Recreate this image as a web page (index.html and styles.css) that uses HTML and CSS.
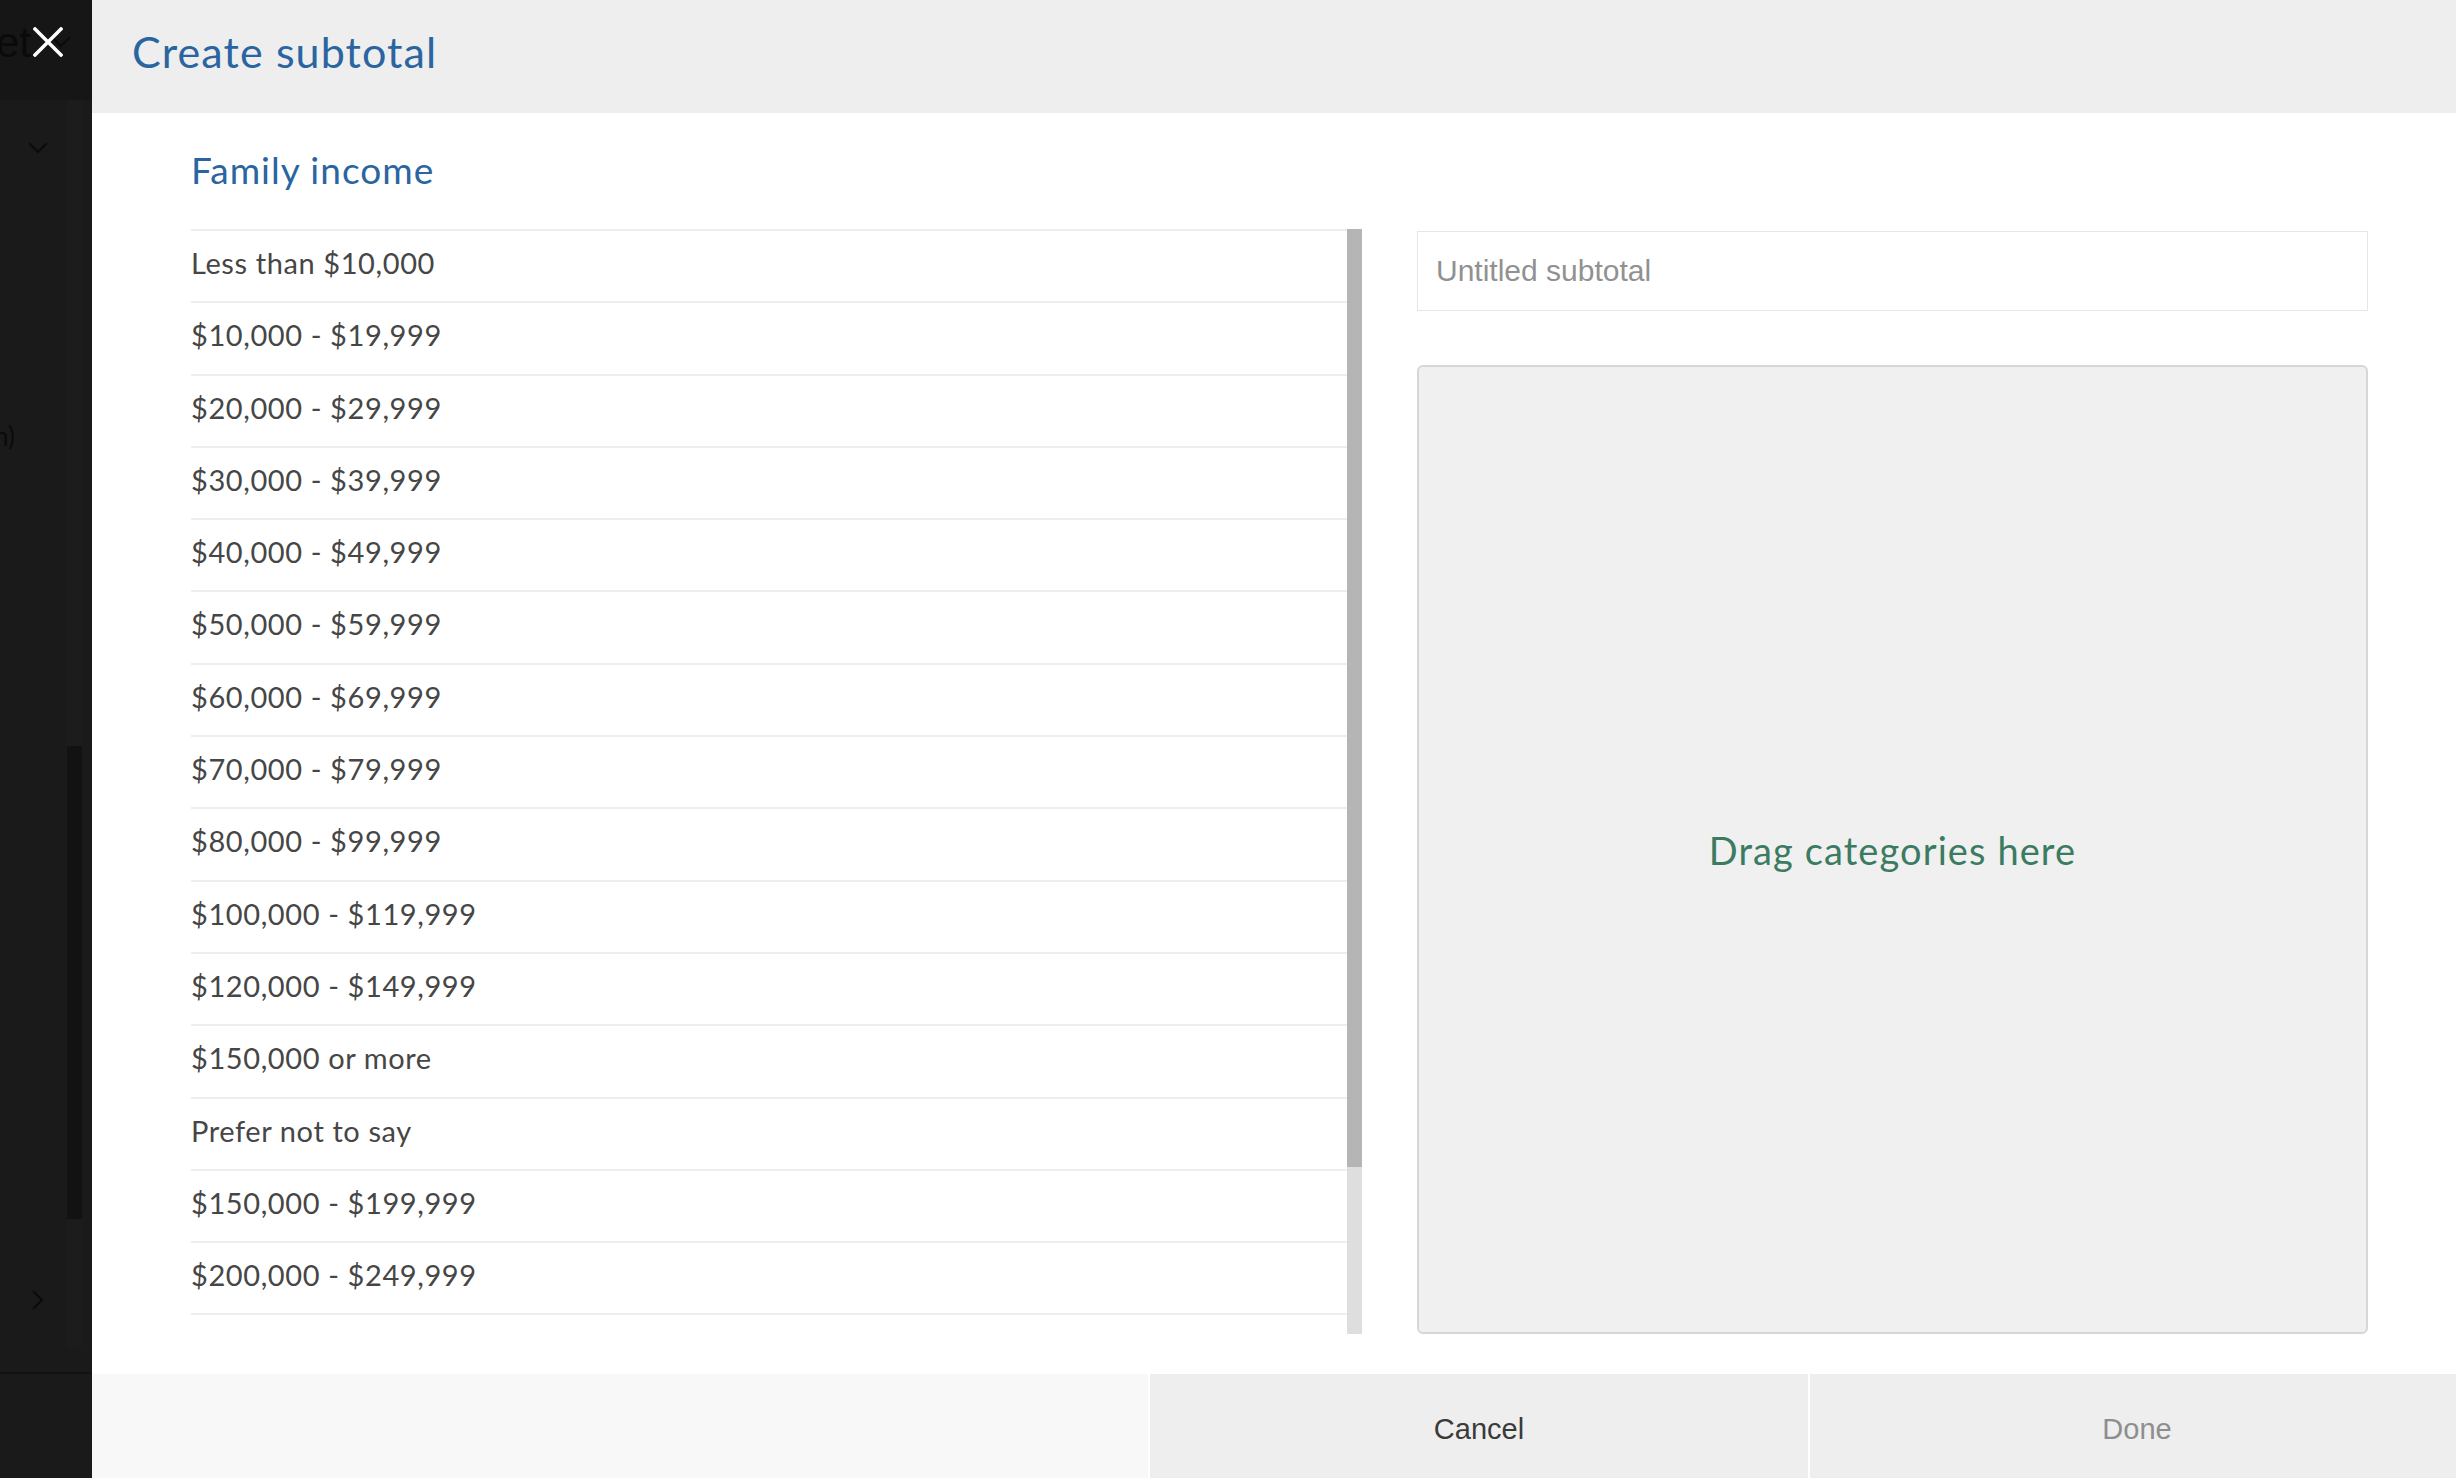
FILE: index.html
```html
<!DOCTYPE html>
<html lang="en">
<head>
    <meta charset="UTF-8">
    <meta name="viewport" content="width=device-width, initial-scale=1.0">
    <title>Create subtotal</title>
    <link rel="stylesheet" href="styles.css">
</head>
<body>
    <div class="backdrop">
        <div class="backdrop-top">
            <span class="ghost-word">et</span>
            <svg class="ghost-chev" width="20" height="12" viewBox="0 0 20 12"><path d="M1 1 L10 10 L19 1" fill="none" stroke="#0b0b0b" stroke-width="2"/></svg>
        </div>
        <div class="backdrop-main">
            <div class="ghost-col">
                <svg class="ghost-chev2" width="20" height="12" viewBox="0 0 20 12"><path d="M1 1 L10 10 L19 1" fill="none" stroke="#0b0b0b" stroke-width="2"/></svg>
                <span class="ghost-paren">n)</span>
                <svg class="ghost-next" width="12" height="20" viewBox="0 0 12 20"><path d="M1 1 L10 10 L1 19" fill="none" stroke="#0b0b0b" stroke-width="2"/></svg>
            </div>
            <div class="ghost-rail"><div class="ghost-rail-dark"></div></div>
        </div>
        <div class="backdrop-bottom"></div>
        <a class="close-btn" href="#" aria-label="Close">
            <svg width="30" height="30" viewBox="0 0 30 30"><path d="M2 2 L28 28 M28 2 L2 28" stroke="#ffffff" stroke-width="3.5" stroke-linecap="square"/></svg>
        </a>
    </div>

    <div class="modal">
        <div class="modal-header">
            <h1>Create subtotal</h1>
        </div>
        <div class="modal-body">
            <h2>Family income</h2>
            <div class="columns">
                <div class="list-wrap">
                    <ul class="category-list">
                        <li>Less than $10,000</li>
                        <li>$10,000 - $19,999</li>
                        <li>$20,000 - $29,999</li>
                        <li>$30,000 - $39,999</li>
                        <li>$40,000 - $49,999</li>
                        <li>$50,000 - $59,999</li>
                        <li>$60,000 - $69,999</li>
                        <li>$70,000 - $79,999</li>
                        <li>$80,000 - $99,999</li>
                        <li>$100,000 - $119,999</li>
                        <li>$120,000 - $149,999</li>
                        <li>$150,000 or more</li>
                        <li>Prefer not to say</li>
                        <li>$150,000 - $199,999</li>
                        <li>$200,000 - $249,999</li>
                    </ul>
                    <div class="scrollbar"><div class="scroll-thumb"></div></div>
                </div>
                <div class="subtotal-panel">
                    <input class="subtotal-name" type="text" placeholder="Untitled subtotal">
                    <div class="drop-zone">Drag categories here</div>
                </div>
            </div>
        </div>
        <div class="modal-footer">
            <div class="footer-space"></div>
            <button class="btn-cancel">Cancel</button>
            <button class="btn-done">Done</button>
        </div>
    </div>
</body>
</html>
```

FILE: styles.css
```css
body {
    margin: 0;
    padding: 0;
    display: flex;
    height: 100vh;
    font-family: Lato, "Liberation Sans", sans-serif;
    overflow: hidden;
}

/* dimmed page behind the dialog */
.backdrop {
    width: 92px;
    background-color: #1a1a1a;
    position: relative;
    display: flex;
    flex-direction: column;
    overflow: hidden;
}
.backdrop-top {
    height: 100px;
    background-color: #161616;
    display: flex;
    align-items: flex-start;
    padding-top: 22px;
    box-sizing: border-box;
}
.ghost-word {
    font-family: "Liberation Sans", sans-serif;
    font-size: 42px;
    color: #0a0a0a;
    margin-left: -4px;
    line-height: 42px;
}
.ghost-chev {
    margin: 14px 0 0 20px;
}
.backdrop-main {
    flex: 1;
    display: flex;
}
.ghost-col {
    flex: 1;
    display: flex;
    flex-direction: column;
}
.ghost-chev2 {
    margin: 42px 0 0 28px;
}
.ghost-paren {
    font-size: 26px;
    color: #0b0b0b;
    margin: 266px 0 0 -6px;
}
.ghost-next {
    margin: 838px 0 0 32px;
}
.ghost-rail {
    width: 15px;
    margin-right: 10px;
    background-color: #1c1c1c;
    padding-top: 646px;
    box-sizing: border-box;
    margin-bottom: 25px;
}
.ghost-rail-dark {
    height: 473px;
    background-color: #121212;
}
.backdrop-bottom {
    height: 104px;
    border-top: 2px solid #111111;
}
.close-btn {
    position: absolute;
    left: 33px;
    top: 27px;
    width: 30px;
    height: 30px;
}

/* dialog */
.modal {
    flex: 1;
    display: flex;
    flex-direction: column;
    background-color: #ffffff;
    min-width: 0;
}
.modal-header {
    height: 113px;
    box-sizing: border-box;
    background-color: #eeeeee;
    padding: 26px 0 0 40px;
}
.modal-header h1 {
    margin: 0;
    font-size: 43px;
    font-weight: 400;
    line-height: 51px;
    letter-spacing: 1.1px;
    color: #2a65a1;
}
.modal-body {
    flex: 1;
    min-height: 0;
    display: flex;
    flex-direction: column;
    padding: 35px 88px 40px 99px;
}
.modal-body h2 {
    margin: 0 0 37px 0;
    font-size: 37px;
    font-weight: 400;
    line-height: 44px;
    letter-spacing: 1px;
    color: #2a65a1;
}
.columns {
    flex: 1;
    min-height: 0;
    display: grid;
    grid-template-columns: 1171px 1fr;
    gap: 55px;
}
.list-wrap {
    display: flex;
    height: 1105px;
}
.category-list {
    flex: 1;
    list-style: none;
    margin: 0;
    padding: 0;
    overflow: hidden;
}
.category-list li {
    height: 72.3px;
    box-sizing: border-box;
    border-top: 2px solid #eeeeee;
    padding-top: 14px;
    font-size: 29px;
    line-height: 35px;
    letter-spacing: 0.6px;
    color: #464646;
}
.category-list li:last-child {
    border-bottom: 2px solid #eeeeee;
    height: 74.3px;
}
.scrollbar {
    width: 15px;
    background-color: #dedede;
}
.scroll-thumb {
    height: 938px;
    background-color: #b5b5b5;
}

.subtotal-panel {
    display: flex;
    flex-direction: column;
}
.subtotal-name {
    height: 80px;
    margin: 2px 0 0 0;
    box-sizing: border-box;
    border: 1px solid #e6e6e6;
    padding: 0 18px;
    font-family: "Liberation Sans", sans-serif;
    font-size: 30px;
    color: #444444;
    outline: none;
}
.subtotal-name::placeholder {
    color: #919191;
}
.drop-zone {
    flex: 1;
    margin-top: 54px;
    background-color: #f0f0f0;
    border: 2px solid #d6d6d6;
    border-radius: 6px;
    display: flex;
    align-items: center;
    justify-content: center;
    font-size: 38px;
    letter-spacing: 1.1px;
    color: #3b7b62;
}

.modal-footer {
    height: 104px;
    display: flex;
    gap: 2px;
    background-color: #ffffff;
}
.footer-space {
    flex: 1;
    background-color: #f8f8f8;
}
.modal-footer button {
    border: none;
    background-color: #eeeeee;
    font-family: "Liberation Sans", sans-serif;
    font-size: 29px;
    padding: 0;
    padding-top: 7px;
}
.btn-cancel {
    width: 658px;
    color: #3a3a3a;
}
.btn-done {
    width: 646px;
    color: #8e8e8e;
    padding-left: 8px !important;
}
```
